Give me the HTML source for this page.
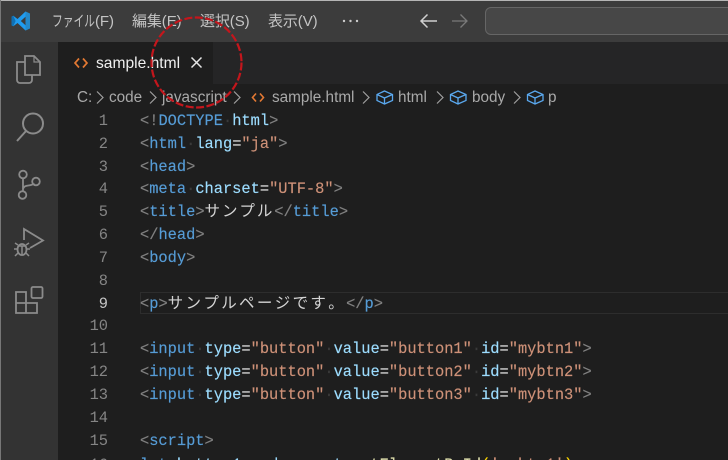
<!DOCTYPE html>
<html lang="ja"><head><meta charset="utf-8"><title>sample</title>
<style>
html,body{margin:0;padding:0;width:728px;height:460px;overflow:hidden;background:#1e1e1e}
#a{position:absolute;left:0;top:0;width:728px;height:460px;overflow:hidden;font-family:"Liberation Sans","Noto Sans CJK JP",sans-serif;filter:blur(.3px)}
.abs{position:absolute}
.m{position:absolute;top:12px;font-size:15px;line-height:20px;color:#c4c4c4;white-space:nowrap;letter-spacing:-.1px}
.bc{position:absolute;top:88px;font-size:15.3px;line-height:20px;color:#a9a9a9;white-space:nowrap}
.n{position:absolute;left:70px;width:38px;text-align:right;font:15.37px/23px "Liberation Mono",monospace;color:#858585}
.l{position:absolute;left:140px;font:15.37px/23px "Liberation Mono","Noto Sans CJK JP",monospace;white-space:pre;color:#d4d4d4;-webkit-text-stroke:.15px}
.l b{font-weight:normal;color:#569cd6}.l i{font-style:normal;color:#808080}.l u{text-decoration:none;color:#9cdcfe}.l s{text-decoration:none;color:#ce9178}.l em{font-style:normal;color:#3a3a3a}
.j{display:inline-block;width:17.45px;text-align:left;font-size:15.5px;line-height:1;color:#d4d4d4;-webkit-text-stroke:0}
.k{width:17.85px}
</style></head><body><div id="a">
<div class="abs" style="left:0;top:0;width:728px;height:42px;background:#3c3c3c"></div>
<div class="abs" style="left:0;top:0;width:728px;height:1px;background:#b5b5b5"></div>
<div class="abs" style="left:0;top:42px;width:58px;height:418px;background:#333"></div>
<div class="abs" style="left:58px;top:42px;width:670px;height:42px;background:#252526"></div>
<div class="abs" style="left:58px;top:42px;width:155px;height:42px;background:#1e1e1e"></div>
<div class="abs" style="left:0;top:0;width:1px;height:460px;background:#777"></div>

<svg class="abs" style="left:11px;top:11px" width="20" height="20" viewBox="0 0 20 20"><path d="M14.5 0.5 19 2.6V17.4L14.5 19.5 6.5 12 2.3 15.3 .5 14.3V5.7L2.3 4.7 6.5 8ZM14.5 5.800 9.800 10 14.5 14.200Z" fill="#1f9cf0"/><path d="M14.5 .5 19 2.600V17.400L14.5 19.500V14.200L14.5 5.800Z" fill="#2489ca"/><path d="M2.300 4.700 .5 5.700V14.300L2.300 15.300 4.600 10Z" fill="#1070b3"/></svg>
<div class="m" style="left:52px"><span style="display:inline-block;width:43px;transform:scaleX(.72);transform-origin:0 0">ファイル</span>(F)</div>
<div class="m" style="left:132px">編集(E)</div>
<div class="m" style="left:200px">選択(S)</div>
<div class="m" style="left:268px">表示(V)</div>
<svg class="abs" style="left:342px;top:18px" width="18" height="6"><circle cx="2" cy="3" r="1.200" fill="#ccc"/><circle cx="8.500" cy="3" r="1.200" fill="#ccc"/><circle cx="15" cy="3" r="1.200" fill="#ccc"/></svg>
<svg class="abs" style="left:419px;top:12px" width="20" height="18" fill="none" stroke-width="1.500"><path d="M2 9H18M8.500 2.500 2 9 8.500 15.500" stroke="#d0d0d0"/></svg>
<svg class="abs" style="left:451px;top:12px" width="18" height="18" fill="none" stroke-width="1.300"><path d="M1 9H16M9.500 2.500 16 9 9.500 15.500" stroke="#7a7a7a"/></svg>
<div class="abs" style="left:485px;top:7px;width:260px;height:26px;background:#474747;border:1px solid #666;border-radius:6px"></div>

<svg class="abs" style="left:14px;top:53px" width="28" height="32" fill="none" stroke="#8b8b8b" stroke-width="1.800"><path d="M11 3H20L26 9V22H11Z"/><path d="M20 3V9H26" stroke-width="1.200"/><path d="M11 9H3V27a3 3 0 0 0 3 3H15a3 3 0 0 0 3-3V22"/></svg>
<svg class="abs" style="left:15px;top:111px" width="30" height="32" fill="none" stroke="#8b8b8b" stroke-width="2"><circle cx="18" cy="12.500" r="10"/><path d="M11 20 2 30"/></svg>
<svg class="abs" style="left:16px;top:169px" width="26" height="32" fill="none" stroke="#8b8b8b" stroke-width="1.800"><circle cx="7" cy="5.500" r="3.800"/><circle cx="6.500" cy="26" r="3.800"/><circle cx="20" cy="12.500" r="3.800"/><path d="M7 9.500V22M7 20c1-4 5-3 8-4 2-.7 3-1 3.500-.5"/></svg>
<svg class="abs" style="left:13px;top:226px" width="32" height="36" fill="none" stroke="#8b8b8b" stroke-width="1.800"><path d="M11 14V3L30 14.500 17 22"/><ellipse cx="9" cy="23.500" rx="4.500" ry="5.500"/><path d="M2 17 5 19M16 17 13 19M1 23H5M13 23H17M2 30 5 27M16 30 13 27M6 20H12M9 20V28" stroke-width="1.500"/></svg>
<svg class="abs" style="left:13px;top:282px" width="32" height="34" fill="none" stroke="#8b8b8b" stroke-width="1.800"><path d="M3 10H13V21H24V31H3ZM3 21H13V31"/><rect x="18.500" y="5" width="11" height="11" rx="1.500"/></svg>

<svg class="abs" style="left:74px;top:57px" width="14" height="12" fill="none" stroke="#e37933" stroke-width="1.700"><path d="M5 1.500 1 6 5 10.500M9 1.500 13 6 9 10.500"/></svg>
<div class="abs" style="left:96px;top:53px;font-size:15.6px;line-height:21px;color:#f0f0f0">sample.html</div>
<svg class="abs" style="left:190px;top:56px" width="13" height="13" stroke="#e6e6e6" stroke-width="1.500"><path d="M1.500 1.500 11.500 11.500M11.500 1.500 1.500 11.500"/></svg>

<div class="bc" style="left:77px">C:</div>
<div class="bc" style="left:109px">code</div>
<div class="bc" style="left:162px">javascript</div>
<div class="bc" style="left:272px">sample.html</div>
<div class="bc" style="left:398px">html</div>
<div class="bc" style="left:472px">body</div>
<div class="bc" style="left:548px">p</div>
<svg class="abs" style="left:0;top:84px" width="728" height="26" fill="none" stroke="#a0a0a0" stroke-width="1.200">
<path d="M97 7.500 103 13.500 97 19.500M150 7.500 156 13.500 150 19.500M234 7.500 240 13.500 234 19.500M363 7.500 369 13.500 363 19.500M437 7.500 443 13.500 437 19.500M514 7.500 520 13.500 514 19.500"/>
<path d="M256 9.500 252.500 13.500 256 17.500M260 9.500 263.500 13.500 260 17.500" stroke="#e37933" stroke-width="1.600"/>
<g stroke="#5aa8ee" stroke-width="1.300">
<path d="M384.500 7 392.500 10.500V16.500L384.500 20 377 16.500V10.500ZM377 10.500 384.500 14 392.500 10.500M384.500 14V20"/>
<path d="M458 7 466 10.500V16.500L458 20 450.500 16.500V10.500ZM450.500 10.500 458 14 466 10.500M458 14V20"/>
<path d="M535 7 543 10.500V16.500L535 20 527.500 16.500V10.500ZM527.500 10.500 535 14 543 10.500M535 14V20"/>
</g></svg>

<div class="abs" style="left:140px;top:292px;width:588px;height:20px;border:1px solid #2d2d2d;border-right:0"></div>

<div class="n" style="top:110px">1</div><div class="n" style="top:133px">2</div><div class="n" style="top:156px">3</div><div class="n" style="top:178px">4</div><div class="n" style="top:201px">5</div><div class="n" style="top:224px">6</div><div class="n" style="top:247px">7</div><div class="n" style="top:270px">8</div><div class="n" style="top:293px;color:#c6c6c6">9</div><div class="n" style="top:315px">10</div><div class="n" style="top:338px">11</div><div class="n" style="top:361px">12</div><div class="n" style="top:384px">13</div><div class="n" style="top:407px">14</div><div class="n" style="top:430px">15</div><div class="n" style="top:454px">16</div>

<div class="l" style="top:110px"><i>&lt;!</i><b>DOCTYPE</b><em>·</em><u>html</u><i>&gt;</i></div>
<div class="l" style="top:133px"><i>&lt;</i><b>html</b><em>·</em><u>lang</u>=<s>"ja"</s><i>&gt;</i></div>
<div class="l" style="top:156px"><i>&lt;</i><b>head</b><i>&gt;</i></div>
<div class="l" style="top:178px"><i>&lt;</i><b>meta</b><em>·</em><u>charset</u>=<s>"UTF-8"</s><i>&gt;</i></div>
<div class="l" style="top:201px"><i>&lt;</i><b>title</b><i>&gt;</i><span class="j">サ</span><span class="j">ン</span><span class="j">プ</span><span class="j">ル</span><i>&lt;/</i><b>title</b><i>&gt;</i></div>
<div class="l" style="top:224px"><i>&lt;/</i><b>head</b><i>&gt;</i></div>
<div class="l" style="top:247px"><i>&lt;</i><b>body</b><i>&gt;</i></div>
<div class="l" style="top:293px"><i>&lt;</i><b>p</b><i>&gt;</i><span class="j k">サ</span><span class="j k">ン</span><span class="j k">プ</span><span class="j k">ル</span><span class="j k">ペ</span><span class="j k">ー</span><span class="j k">ジ</span><span class="j k">で</span><span class="j k">す</span><span class="j k">。</span><i>&lt;/</i><b>p</b><i>&gt;</i></div>
<div class="l" style="top:338px"><i>&lt;</i><b>input</b><em>·</em><u>type</u>=<s>"button"</s><em>·</em><u>value</u>=<s>"button1"</s><em>·</em><u>id</u>=<s>"mybtn1"</s><i>&gt;</i></div>
<div class="l" style="top:361px"><i>&lt;</i><b>input</b><em>·</em><u>type</u>=<s>"button"</s><em>·</em><u>value</u>=<s>"button2"</s><em>·</em><u>id</u>=<s>"mybtn2"</s><i>&gt;</i></div>
<div class="l" style="top:384px"><i>&lt;</i><b>input</b><em>·</em><u>type</u>=<s>"button"</s><em>·</em><u>value</u>=<s>"button3"</s><em>·</em><u>id</u>=<s>"mybtn3"</s><i>&gt;</i></div>
<div class="l" style="top:430px"><i>&lt;</i><b>script</b><i>&gt;</i></div>
<div class="l" style="top:454px"><b>let</b> <u>button1</u> = <u>document</u>.<span style="color:#dcdcaa">getElementById</span><span style="color:#ffd700">(</span><s>'mybtn1'</s><span style="color:#ffd700">)</span>;</div>

<svg class="abs" style="left:148px;top:14px" width="98" height="98" fill="none"><circle cx="48.500" cy="48.500" r="45" stroke="#c4161c" stroke-width="2.200" stroke-dasharray="8 2.500"/></svg>
</div></body></html>
